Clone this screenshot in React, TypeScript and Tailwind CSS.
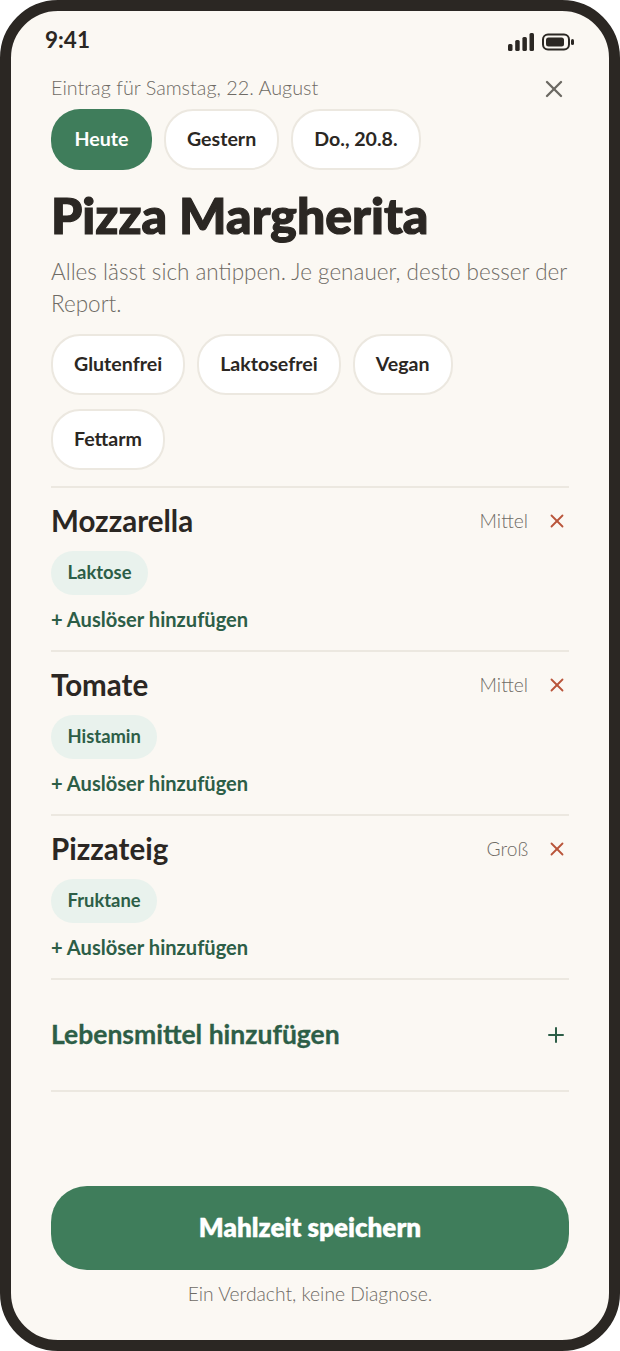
import React from 'react'
import { Plus, X } from 'lucide-react'

const foods = [
  { name: 'Mozzarella', size: 'Mittel', trigger: 'Laktose' },
  { name: 'Tomate', size: 'Mittel', trigger: 'Histamin' },
  { name: 'Pizzateig', size: 'Groß', trigger: 'Fruktane' },
]

const Chip = ({ label, active }: { label: string; active?: boolean }) => (
  <div
    className={`flex h-[61px] items-center rounded-[29px] pb-[1px] text-[19.6px] font-bold ${
      active
        ? 'bg-[#3f7d5b] px-[23.5px] text-white'
        : 'border-2 border-[#ece8e0] bg-white px-[21px] text-[#2b2723]'
    }`}
  >
    {label}
  </div>
)

const App = () => {
  return (
    <div className="h-[1351px] w-[620px] bg-white font-['Lato',sans-serif]">
      <div className="flex h-full flex-col rounded-[58px] border-[11px] border-[#2b2723] bg-[#fbf8f3]">
        {/* status bar */}
        <div className="flex h-[48px] items-end justify-between pl-[34px] pr-[35px]">
          <span className="mb-[5px] text-[22.5px] font-bold leading-[28px] text-[#2b2723]">9:41</span>
          <div className="flex items-center gap-[8px] pb-[8px]">
            <svg width="26" height="18" viewBox="0 0 26 18" fill="#2b2723">
              <rect x="0" y="11" width="4.5" height="7" rx="1.5" />
              <rect x="7.2" y="7" width="4.5" height="11" rx="1.5" />
              <rect x="14.4" y="4" width="4.5" height="14" rx="1.5" />
              <rect x="21.5" y="0" width="4.5" height="18" rx="1.5" />
            </svg>
            <svg width="32" height="18" viewBox="0 0 32 18" fill="none">
              <rect x="1" y="1.5" width="26" height="15" rx="5" stroke="#2b2723" strokeWidth="2" />
              <rect x="4" y="4.5" width="18" height="9" rx="2.5" fill="#2b2723" />
              <rect x="29" y="6" width="3" height="6" rx="1.5" fill="#2b2723" />
            </svg>
          </div>
        </div>

        <div className="flex flex-1 flex-col px-[40px]">
          <div className="mt-[14px] flex items-center justify-between">
            <span className="mb-[3px] text-[19.8px] font-light leading-[26px] text-[#6f6b65]">
              Eintrag für Samstag, 22. August
            </span>
            <X size={28} strokeWidth={2} className="mr-[1px] mt-[2px] text-[#6b6862]" />
          </div>

          <div className="mt-[6px] flex gap-[12px]">
            <Chip label="Heute" active />
            <Chip label="Gestern" />
            <Chip label="Do., 20.8." />
          </div>

          <h1 className="mt-[13px] text-[50px] font-black leading-[64px] text-[#2b2723] [-webkit-text-stroke:1.2px_#2b2723]">
            Pizza Margherita
          </h1>

          <p className="mt-[9px] text-[22.5px] font-light leading-[32px] text-[#6f6b65]">
            Alles lässt sich antippen. Je genauer, desto besser der Report.
          </p>

          <div className="mt-[14px] flex flex-wrap gap-x-[12px] gap-y-[14px]">
            <Chip label="Glutenfrei" />
            <Chip label="Laktosefrei" />
            <Chip label="Vegan" />
            <Chip label="Fettarm" />
          </div>

          <div className="mt-[16px]">
            {foods.map((food) => (
              <div key={food.name} className="h-[164px] border-t-2 border-[#ece8e0]">
                <div className="mt-[15px] flex items-center justify-between">
                  <span className="text-[29.5px] font-bold leading-[36px] text-[#2b2723]">
                    {food.name}
                  </span>
                  <div className="flex items-center gap-[18px]">
                    <span className="text-[19.2px] font-light text-[#6f6b65]">{food.size}</span>
                    <X size={22} strokeWidth={2} className="mr-[1px] text-[#b9553a]" />
                  </div>
                </div>
                <div className="mt-[12px] flex">
                  <div className="flex h-[44px] items-center rounded-[22px] bg-[#e9f2ed] px-[16.5px] text-[18.4px] font-bold text-[#2d5e47]">
                    {food.trigger}
                  </div>
                </div>
                <div className="mt-[11px] text-[20.1px] font-bold leading-[26px] text-[#2d5e47]">
                  + Auslöser hinzufügen
                </div>
              </div>
            ))}
          </div>

          <div className="flex h-[114px] items-center justify-between border-y-2 border-[#ece8e0]">
            <span className="text-[26.5px] font-bold text-[#2d5e47] [-webkit-text-stroke:0.3px_#2d5e47]">
              Lebensmittel hinzufügen
            </span>
            <Plus size={24} strokeWidth={2} className="mr-[1px] text-[#2d5e47]" />
          </div>

          <div className="mt-auto flex h-[84px] items-center justify-center rounded-[36px] bg-[#3f7d5b] pb-[2px] text-[26px] font-extrabold text-white [-webkit-text-stroke:0.3px_#ffffff]">
            Mahlzeit speichern
          </div>
          <p className="mb-[34px] mt-[12px] text-center text-[19.3px] font-light leading-[24px] text-[#6f6b65]">
            Ein Verdacht, keine Diagnose.
          </p>
        </div>
      </div>
    </div>
  )
}

export default App
